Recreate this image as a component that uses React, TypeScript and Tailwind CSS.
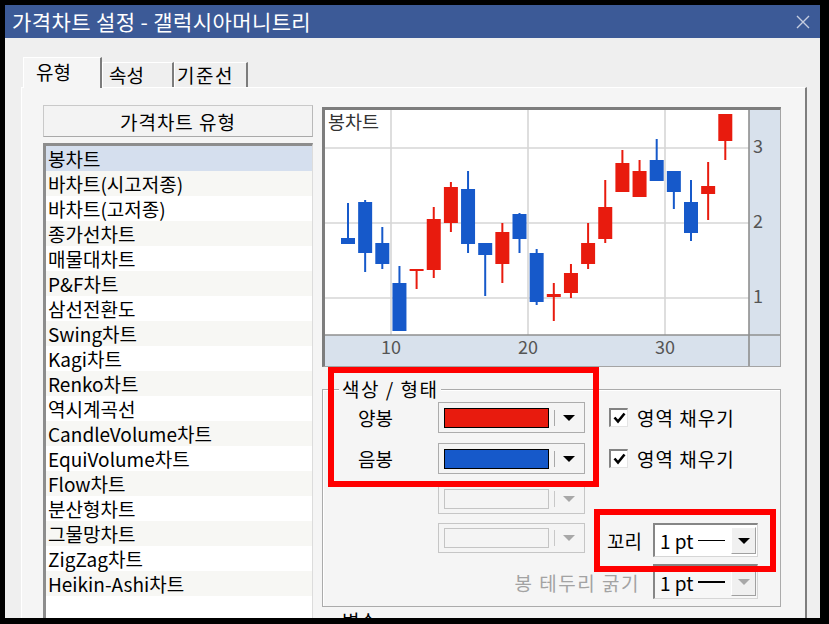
import React from "react";

const items = [
  "봉차트",
  "바차트(시고저종)",
  "바차트(고저종)",
  "종가선차트",
  "매물대차트",
  "P&F차트",
  "삼선전환도",
  "Swing차트",
  "Kagi차트",
  "Renko차트",
  "역시계곡선",
  "CandleVolume차트",
  "EquiVolume차트",
  "Flow차트",
  "분산형차트",
  "그물망차트",
  "ZigZag차트",
  "Heikin-Ashi차트",
];

type C = [string, number, number, number, number];
const candles: C[] = [
  ["b", 238, 244, 203, 244],
  ["b", 202, 253, 200, 272],
  ["b", 243, 264, 227, 269],
  ["b", 283, 331, 266, 331],
  ["r", 269, 271, 269, 289],
  ["r", 219, 270, 207, 278],
  ["r", 187, 223, 182, 232],
  ["b", 189, 244, 171, 253],
  ["b", 243, 255, 243, 296],
  ["r", 232, 264, 223, 283],
  ["b", 214, 239, 213, 253],
  ["b", 253, 302, 249, 305],
  ["r", 294, 297, 283, 321],
  ["r", 273, 293, 264, 298],
  ["r", 243, 264, 223, 269],
  ["r", 207, 239, 180, 243],
  ["r", 163, 192, 150, 192],
  ["r", 171, 197, 160, 197],
  ["b", 160, 181, 139, 181],
  ["b", 171, 192, 171, 209],
  ["b", 202, 233, 180, 241],
  ["r", 186, 194, 162, 220],
  ["r", 114, 141, 114, 160],
];

const RED = "#e81b0e";
const BLUE = "#1659ca";
const FONT = "Noto Sans CJK KR, sans-serif";

function Chart() {
  return (
    <div className="w-[459px] h-[260px] border-t-[3px] border-l-[3px] border-[#7d7d7d] border-r border-b border-r-[#a4a4a4] border-b-[#a4a4a4] bg-white">
      <svg width={455} height={256} viewBox="325 110 455 256" className="block">
        <rect x={325} y={110} width={424} height={225} fill="#fff" />
        <rect x={749} y={110} width={31} height={256} fill="#d8e1ec" />
        <rect x={325} y={335} width={455} height={31} fill="#d8e1ec" />
        {[391, 528, 665].map((x) => (
          <line key={x} x1={x} y1={110} x2={x} y2={335} stroke="#d6d6d6" strokeWidth={1.6} />
        ))}
        {[148, 223, 298].map((y) => (
          <line key={y} x1={325} y1={y} x2={749} y2={y} stroke="#d6d6d6" strokeWidth={1.6} />
        ))}
        <line x1={749} y1={110} x2={749} y2={366} stroke="#8f8f8f" strokeWidth={1.6} />
        <line x1={325} y1={335} x2={780} y2={335} stroke="#8f8f8f" strokeWidth={1.6} />
        {candles.map(([c, bt, bb, wt, wb], i) => {
          const x = 341 + i * 17.15;
          const col = c === "r" ? RED : BLUE;
          return (
            <g key={i}>
              <line x1={x + 7} y1={wt} x2={x + 7} y2={wb} stroke={col} strokeWidth={2} />
              <rect x={x} y={bt} width={14} height={Math.max(bb - bt, 2)} fill={col} />
            </g>
          );
        })}
        <text x={328} y={129} fontSize={18.5} fill="#333" fontFamily={FONT}>
          봉차트
        </text>
        {[
          ["10", 391],
          ["20", 528],
          ["30", 665],
        ].map(([t, x]) => (
          <text key={t} x={x as number} y={354} fontSize={18} fill="#555" textAnchor="middle" fontFamily={FONT}>
            {t}
          </text>
        ))}
        {[
          ["3", 153],
          ["2", 228],
          ["1", 303],
        ].map(([t, y]) => (
          <text key={t} x={753} y={y as number} fontSize={18} fill="#555" fontFamily={FONT}>
            {t}
          </text>
        ))}
      </svg>
    </div>
  );
}

function Arrow({ color }: { color: string }) {
  return (
    <svg width={12} height={6} viewBox="0 0 12 6" className="block">
      <polygon points="0,0 12,0 6,6" fill={color} />
    </svg>
  );
}

function ColorCombo({ color, disabled }: { color?: string; disabled?: boolean }) {
  return (
    <div
      className={
        "w-[147px] flex items-center pl-[5px] border bg-[#f4f4f4] " +
        (disabled ? "h-[30px] border-[#c6c6c6]" : "h-[31px] border-[#acacac]")
      }
    >
      {disabled ? (
        <div className="w-[105px] h-[20px] border border-[#c4c4c4]" />
      ) : (
        <div className="w-[105px] h-[20px] border border-black" style={{ backgroundColor: color }} />
      )}
      <div className={"ml-[5px] w-px h-[16px] " + (disabled ? "bg-[#c8c8c8]" : "bg-[#a8a8a8]")} />
      <div className="ml-[8px]">
        <Arrow color={disabled ? "#a8a8a8" : "#000"} />
      </div>
    </div>
  );
}

function Check() {
  return (
    <div className="w-[19px] h-[19px] border-t-2 border-l-2 border-[#838383] border-b border-r border-b-[#e4e4e4] border-r-[#e4e4e4] bg-white flex items-center justify-center">
      <svg width={13} height={12} viewBox="0 0 13 12">
        <polyline points="1.5,5.5 5,9.5 11.5,1.5" fill="none" stroke="#000" strokeWidth={2.6} />
      </svg>
    </div>
  );
}

function PtSelect({ disabled }: { disabled?: boolean }) {
  return (
    <div
      className={
        "w-[105px] flex border-t-2 border-l-2 border-[#868686] border-b border-r border-b-[#d6d6d6] border-r-[#d6d6d6] " +
        (disabled ? "h-[35px] bg-[#f7f7f7]" : "h-[34px] bg-white")
      }
    >
      <div className="flex-1 pl-[5px] flex items-center text-[19px] leading-none text-black whitespace-nowrap">
        1 pt <span className="ml-[5px] inline-block w-[27px] h-[1.5px] bg-black" />
      </div>
      <div className="w-[25px] my-[2px] mr-px bg-[#f0f0f0] border-t border-l border-white border-b border-r border-b-[#a0a0a0] border-r-[#a0a0a0] flex items-center justify-center">
        <Arrow color={disabled ? "#a8a8a8" : "#000"} />
      </div>
    </div>
  );
}

export default function App() {
  return (
    <div
      className="w-[829px] h-[624px] bg-black overflow-hidden pl-[5px] pt-[5px] text-black"
      style={{ fontFamily: FONT }}
    >
      <div className="relative w-[815px] h-[613px] bg-[#efefef] flex flex-col overflow-hidden">
        {/* title bar */}
        <div className="h-[33px] shrink-0 bg-[#3c5a97] flex items-center justify-between pl-[7px] pr-[10px]">
          <span className="text-white text-[21px] leading-none tracking-[0.4px]">가격차트 설정 - 갤럭시아머니트리</span>
          <svg width={14} height={14} viewBox="0 0 14 14">
            <path d="M1 1 L13 13 M13 1 L1 13" stroke="#c5cde0" strokeWidth={1.4} />
          </svg>
        </div>

        {/* body */}
        <div className="flex-1 flex flex-col pl-[16px] pr-[13px] pt-[19px] min-h-0">
          {/* tabs */}
          <div className="flex items-end h-[30px] pl-[2px] shrink-0 text-[19px]">
            <div className="relative z-10 -mb-px w-[79px] h-[31px] bg-[#f5f5f5] border-t border-l border-white border-r-2 border-r-[#7c7c7c] pl-[12px] pt-[3px] leading-[22px]">
              유형
            </div>
            <div className="w-[72px] h-[25px] border-t border-l border-white border-r-2 border-r-[#7c7c7c] pl-[6px] leading-[24px]">
              속성
            </div>
            <div className="w-[74px] h-[25px] border-t border-l border-white border-r-2 border-r-[#7c7c7c] pl-[2px] leading-[24px] tracking-[1.5px]">
              기준선
            </div>
          </div>

          {/* panel */}
          <div className="flex-1 min-h-0 bg-[#f5f5f5] border-t border-l border-white border-r-2 border-r-[#7e7e7e] pt-[17px] pl-[21px] flex">
            {/* left column */}
            <div className="w-[270px] flex flex-col">
              <div className="h-[32px] shrink-0 border border-[#c9c9c9] border-b-[#a9a9a9] border-r-[#b9b9b9] bg-[#f3f3f3] flex items-center justify-center text-[19px] leading-none tracking-[1px]">
                가격차트 유형
              </div>
              <div className="mt-[6px] flex-1 bg-white border-t-[3px] border-l-[3px] border-[#8d8d8d] border-r border-r-[#dcdcdc] overflow-hidden">
                {items.map((t, i) => (
                  <div
                    key={t}
                    className={
                      "h-[25px] pl-[2px] text-[19px] leading-[25px] whitespace-nowrap " +
                      (i === 0 ? "bg-[#d5dfee]" : i % 2 === 1 ? "bg-[#f7f7f4]" : "bg-white")
                    }
                  >
                    {t}
                  </div>
                ))}
              </div>
            </div>

            {/* right column */}
            <div className="ml-[9px] w-[459px] flex flex-col">
              <div className="mt-[2px]">
                <Chart />
              </div>

              <div className="relative mt-[22px] h-[218px] shrink-0 border border-[#ababab] shadow-[inset_1px_1px_0_#ffffff] text-[19px]">
                <div className="absolute -top-[12px] left-[16px] px-[3px] bg-[#f5f5f5] leading-[22px] tracking-[1.5px] whitespace-nowrap">
                  색상 / 형태
                </div>

                <div className="mt-[12px] pl-[35px] flex items-center">
                  <div className="w-[80px] leading-none">양봉</div>
                  <ColorCombo color={RED} />
                  <div className="ml-[24px]">
                    <Check />
                  </div>
                  <div className="ml-[9px] leading-none tracking-[1px] whitespace-nowrap">영역 채우기</div>
                </div>

                <div className="mt-[10px] pl-[35px] flex items-center">
                  <div className="w-[80px] leading-none">음봉</div>
                  <ColorCombo color={BLUE} />
                  <div className="ml-[24px]">
                    <Check />
                  </div>
                  <div className="ml-[9px] leading-none tracking-[1px] whitespace-nowrap">영역 채우기</div>
                </div>

                <div className="mt-[10px] pl-[115px] flex">
                  <ColorCombo disabled />
                </div>

                <div className="mt-[9px] pl-[115px] flex items-start">
                  <ColorCombo disabled />
                  <div className="ml-[22px] w-[46px] leading-[36px]">꼬리</div>
                  <PtSelect />
                </div>

                <div className="mt-[5px] pl-[35px] flex items-start">
                  <div className="w-[295px] pr-[13px] text-right leading-[38px] text-[#a3a3a3] whitespace-nowrap tracking-[1.5px]">
                    봉 테두리 굵기
                  </div>
                  <PtSelect disabled />
                </div>
              </div>

              <div className="mt-[3px] pl-[20px] text-[19px] leading-[22px]">변수</div>
            </div>
          </div>
        </div>

        {/* red annotation boxes */}
        <div className="absolute left-[323px] top-[362px] w-[271px] h-[120px] border-[6px] border-[#ff0000] pointer-events-none" />
        <div className="absolute left-[589px] top-[504px] w-[182px] h-[63px] border-[6px] border-[#ff0000] pointer-events-none" />
      </div>
    </div>
  );
}
